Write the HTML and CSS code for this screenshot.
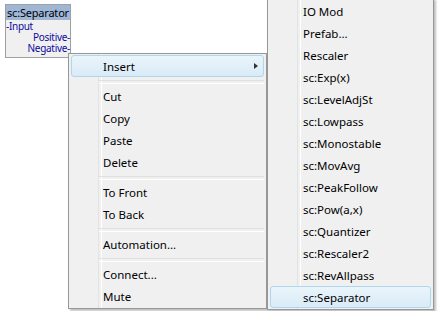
FILE: index.html
```html
<!DOCTYPE html>
<html lang="en">

<head>
    <meta charset="UTF-8">
    <title>sc:Separator menu</title>
    <link rel="stylesheet" href="styles.css">
</head>

<body>

    <div class="canvas">
        <!-- module on the patch canvas -->
        <div class="node">
            <div class="node-title">sc:Separator</div>
            <div class="port in">-Input</div>
            <div class="port out">Positive-</div>
            <div class="port out">Negative-</div>
        </div>

        <!-- right-click menu -->
        <div class="menu context">
            <div class="item hot">Insert<span class="arrow"></span></div>
            <div class="sep"></div>
            <div class="item">Cut</div>
            <div class="item">Copy</div>
            <div class="item">Paste</div>
            <div class="item">Delete</div>
            <div class="sep"></div>
            <div class="item">To Front</div>
            <div class="item">To Back</div>
            <div class="sep"></div>
            <div class="item">Automation...</div>
            <div class="sep"></div>
            <div class="item">Connect...</div>
            <div class="item">Mute</div>
        </div>

        <!-- Insert submenu -->
        <div class="menu submenu">
            <div class="item">IO Mod</div>
            <div class="item">Prefab...</div>
            <div class="item">Rescaler</div>
            <div class="item">sc:Exp(x)</div>
            <div class="item">sc:LevelAdjSt</div>
            <div class="item">sc:Lowpass</div>
            <div class="item">sc:Monostable</div>
            <div class="item">sc:MovAvg</div>
            <div class="item">sc:PeakFollow</div>
            <div class="item">sc:Pow(a,x)</div>
            <div class="item">sc:Quantizer</div>
            <div class="item">sc:Rescaler2</div>
            <div class="item">sc:RevAllpass</div>
            <div class="item hot">sc:Separator</div>
        </div>
    </div>

</body>

</html>
```

FILE: styles.css
```css
* {
    margin: 0px;
    padding: 0px;
    box-sizing: border-box;
}

body {
    background: #fff;
    font-family: "Noto Sans", "DejaVu Sans", sans-serif;
    font-size: 11.5px;
    color: #000;
    overflow: hidden;
}

.canvas {
    position: relative;
    width: 444px;
    height: 311px;
    overflow: hidden;
    padding: 4px 0 0 5px;
}

/* module box */
.node {
    width: 66px;
    height: 54px;
    border: 1px solid #a0a0a0;
    background: #f0f0f0;
    line-height: 11px;
}

.node-title {
    height: 15px;
    line-height: 15px;
    font-size: 11px;
    letter-spacing: -0.2px;
    background: #9fb7d6;
    color: #000;
    padding-left: 1px;
    white-space: nowrap;
    overflow: hidden;
    margin-bottom: 1px;
}

.port {
    color: #0a0aa0;
    font-size: 10px;
    letter-spacing: -0.3px;
    white-space: nowrap;
}

.port.out {
    text-align: right;
}

/* menus */
.menu {
    position: absolute;
    background: #f0f0f0;
    border: 1px solid #979797;
    padding: 1px 2px;
    box-shadow: 2px 2px 2px rgba(0, 0, 0, 0.25);
}

/* icon gutter */
.menu::before {
    content: "";
    position: absolute;
    top: 0;
    bottom: 0;
    left: 29px;
    width: 2px;
    border-left: 1px solid #e2e3e3;
    border-right: 1px solid #fff;
}

.context {
    left: 68px;
    top: 53px;
    width: 199px;
}

.submenu {
    left: 267px;
    top: -2px;
    width: 167px;
}

.item {
    position: relative;
    height: 22px;
    line-height: 21px;
    padding-left: 32px;
    border: 1px solid transparent;
    border-radius: 3px;
    white-space: nowrap;
    z-index: 1;
}

.context .item {
    padding-left: 31px;
}

.item.hot {
    background: linear-gradient(#eaf4fb, #d9ebf7);
    border-color: #aed7ee;
}

.arrow {
    position: absolute;
    right: 5px;
    top: 7px;
    width: 0;
    height: 0;
    border-top: 3.5px solid transparent;
    border-bottom: 3.5px solid transparent;
    border-left: 4px solid #333;
}

.sep {
    position: relative;
    height: 8px;
    margin-left: 28px;
    z-index: 1;
}

.sep::after {
    content: "";
    position: absolute;
    left: 0;
    right: 0;
    top: 3px;
    height: 2px;
    border-top: 1px solid #e0e0e0;
    border-bottom: 1px solid #fff;
}
```
